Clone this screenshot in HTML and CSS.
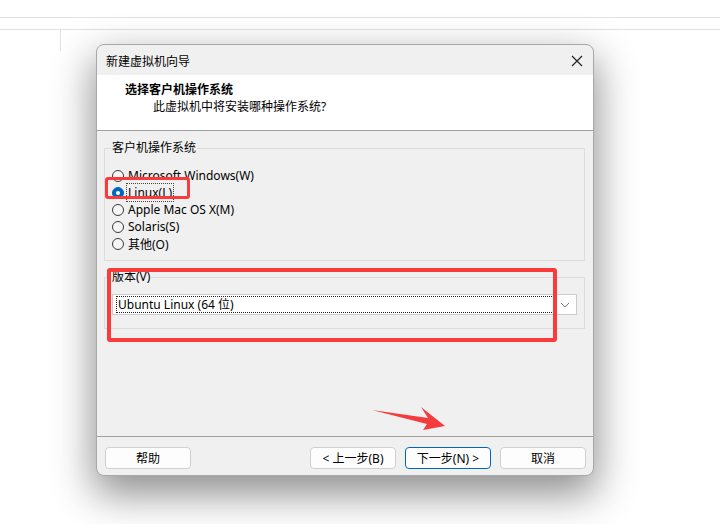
FILE: index.html
```html
<!DOCTYPE html>
<html lang="zh-CN">
<head>
    <meta charset="UTF-8">
    <title>新建虚拟机向导</title>
    <link rel="stylesheet" href="styles.css">
</head>
<body>
    <div class="topbar"></div>
    <div class="tabbar"></div>

    <div class="workspace">
        <div class="stub"></div>

        <div class="dialog">
            <div class="titlebar">
                <span class="title">新建虚拟机向导</span>
                <svg class="close" width="12" height="12" viewBox="0 0 12 12">
                    <path d="M1 1 L11 11 M11 1 L1 11" stroke="#222" stroke-width="1.2"/>
                </svg>
            </div>

            <div class="header">
                <div class="h-title">选择客户机操作系统</div>
                <div class="h-sub">此虚拟机中将安装哪种操作系统?</div>
            </div>

            <div class="body">
                <fieldset class="group">
                    <legend>客户机操作系统</legend>
                    <div class="radio"><span class="dot"></span>Microsoft Windows(W)</div>
                    <div class="radio checked"><span class="dot"></span><span class="focus">Linux(L)</span></div>
                    <div class="radio"><span class="dot"></span>Apple Mac OS X(M)</div>
                    <div class="radio"><span class="dot"></span>Solaris(S)</div>
                    <div class="radio"><span class="dot"></span>其他(O)</div>
                </fieldset>

                <fieldset class="group version">
                    <legend>版本(V)</legend>
                    <div class="combo">
                        <div class="combo-text">Ubuntu Linux (64 位)</div>
                        <svg class="chev" width="10" height="6" viewBox="0 0 10 6">
                            <path d="M1 1 L5 5 L9 1" fill="none" stroke="#777" stroke-width="1"/>
                        </svg>
                    </div>
                </fieldset>
            </div>

            <div class="footer">
                <button class="btn">帮助</button>
                <div class="spacer"></div>
                <button class="btn">&lt; 上一步(B)</button>
                <button class="btn primary">下一步(N) &gt;</button>
                <button class="btn">取消</button>
            </div>
        </div>
    </div>

    <!-- annotations -->
    <div class="mark mark-linux"></div>
    <div class="mark mark-version"></div>
    <svg class="arrow" width="80" height="30" viewBox="0 0 80 30">
        <polygon points="0,5 56,13 49,2 73,21 51,25 55,19" fill="#f53b3b"/>
    </svg>
</body>
</html>
```

FILE: styles.css
```css
html { background: #fff; }
body { margin: 0; min-height: 524px; background: #fff; font-family: "Noto Sans", "Noto Sans CJK SC", sans-serif; font-size: 12px; color: #000; }
.topbar { height: 17px; border-bottom: 1px solid #e2e2e2; }
.tabbar { height: 11px; border-bottom: 1px solid #e2e2e2; }
.workspace { display: flex; align-items: flex-start; }
.stub { width: 60px; height: 21px; border-right: 1px solid #e2e2e2; }

.dialog { margin: 14px 0 0 35px; width: 498px; height: 432px; box-sizing: border-box; border: 1px solid #a8a8a8; border-radius: 8px; background: #f0f0f0; box-shadow: 0 16px 40px 2px rgba(0,0,0,0.45); display: flex; flex-direction: column; overflow: hidden; }

.titlebar { height: 30px; flex-shrink: 0; display: flex; align-items: center; padding: 0 10px 0 9px; }
.title { flex: 1; padding-top: 2px; }
.close { margin-top: 2px; }

.header { height: 55px; flex-shrink: 0; background: #fff; border-bottom: 1px solid #a0a0a0; padding-left: 28px; }
.h-title { font-weight: bold; margin-top: 7px; line-height: 16px; }
.h-sub { margin-left: 28px; margin-top: 1px; line-height: 16px; }

.body { height: 305px; flex-shrink: 0; box-sizing: border-box; padding: 9px 8px 0 7px; }
.group { margin: 0; border: 1px solid #dcdcdc; padding: 11px 7px 8px 7px; }
.group legend { padding: 0 1px; margin-left: -1px; line-height: 16px; }
.version { margin-top: 8px; padding-top: 9px; padding-bottom: 13px; }

.radio { display: flex; align-items: center; height: 17px; gap: 4px; }
.dot { width: 10px; height: 10px; border: 1px solid #3a3a3a; border-radius: 50%; background: #f6f6f6; box-sizing: content-box; }
.checked .dot { background: #0067c0; border-color: #0067c0; position: relative; }
.checked .dot::after { content: ""; position: absolute; left: 3px; top: 3px; width: 4px; height: 4px; border-radius: 50%; background: #fff; }
.focus { border: 1px dotted #444; padding: 0 1px; margin-left: -2px; }

.combo { height: 21px; box-sizing: border-box; background: #fff; border: 1px solid #cccccc; display: flex; align-items: center; padding: 2px; }
.combo-text { flex: 1; height: 15px; line-height: 15px; border: 1px dotted #222; padding-left: 1px; margin-right: 4px; margin-left: 1px; }
.chev { margin-right: 4px; }

.footer { flex: 1; border-top: 1px solid #a0a0a0; display: flex; align-items: flex-start; padding: 10px 7px 0 8px; gap: 9px; }
.spacer { flex: 1; }
.btn { width: 86px; height: 22px; background: #fdfdfd; border: 1px solid #d0d0d0; border-radius: 4px; font-family: inherit; font-size: 12px; padding: 0; color: #000; }
.primary { border-color: #0067c0; }

.mark { position: absolute; border: 3px solid #fb3a3a; border-radius: 3px; box-sizing: border-box; }
.mark-linux { left: 105px; top: 177px; width: 85px; height: 22px; }
.mark-version { left: 107px; top: 268px; width: 450px; height: 74px; border-width: 4px; }
.arrow { position: absolute; left: 372px; top: 405px; }
```
